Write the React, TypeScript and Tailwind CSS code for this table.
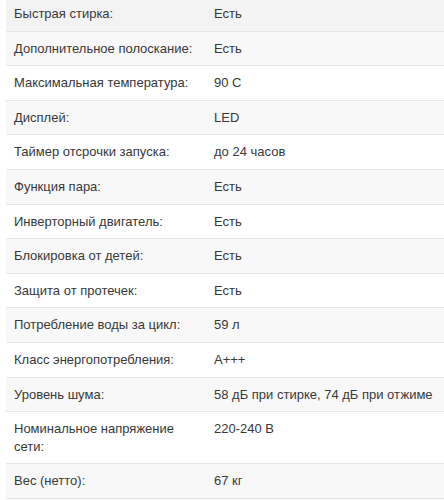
import React from "react";

const rows: [string, string][] = [
  ["Быстрая стирка:", "Есть"],
  ["Дополнительное полоскание:", "Есть"],
  ["Максимальная температура:", "90 С"],
  ["Дисплей:", "LED"],
  ["Таймер отсрочки запуска:", "до 24 часов"],
  ["Функция пара:", "Есть"],
  ["Инверторный двигатель:", "Есть"],
  ["Блокировка от детей:", "Есть"],
  ["Защита от протечек:", "Есть"],
  ["Потребление воды за цикл:", "59 л"],
  ["Класс энергопотребления:", "A+++"],
  ["Уровень шума:", "58 дБ при стирке, 74 дБ при отжиме"],
  ["Номинальное напряжение сети:", "220-240 В"],
  ["Вес (нетто):", "67 кг"],
];

export default function App() {
  return (
    <div className="w-[444px] h-[500px] overflow-hidden bg-white">
      <div
        className="ml-[6px] -mt-[3px] w-[460px] text-[13px] leading-[17.6px] text-[#383838]"
        style={{ fontFamily: '"Liberation Sans", Arial, sans-serif' }}
      >
        {rows.map(([k, v], i) => (
          <div
            key={i}
            className={
              "flex border-b border-[#e6e6e6] " +
              (i === 0 ? "bg-[#f3f3f3]" : i % 2 === 1 ? "bg-[#f8f8f8]" : "bg-white")
            }
          >
            <div className="w-[200px] shrink-0 px-2 py-2">{k}</div>
            <div className="flex-1 px-2 py-2">{v}</div>
          </div>
        ))}
      </div>
    </div>
  );
}
